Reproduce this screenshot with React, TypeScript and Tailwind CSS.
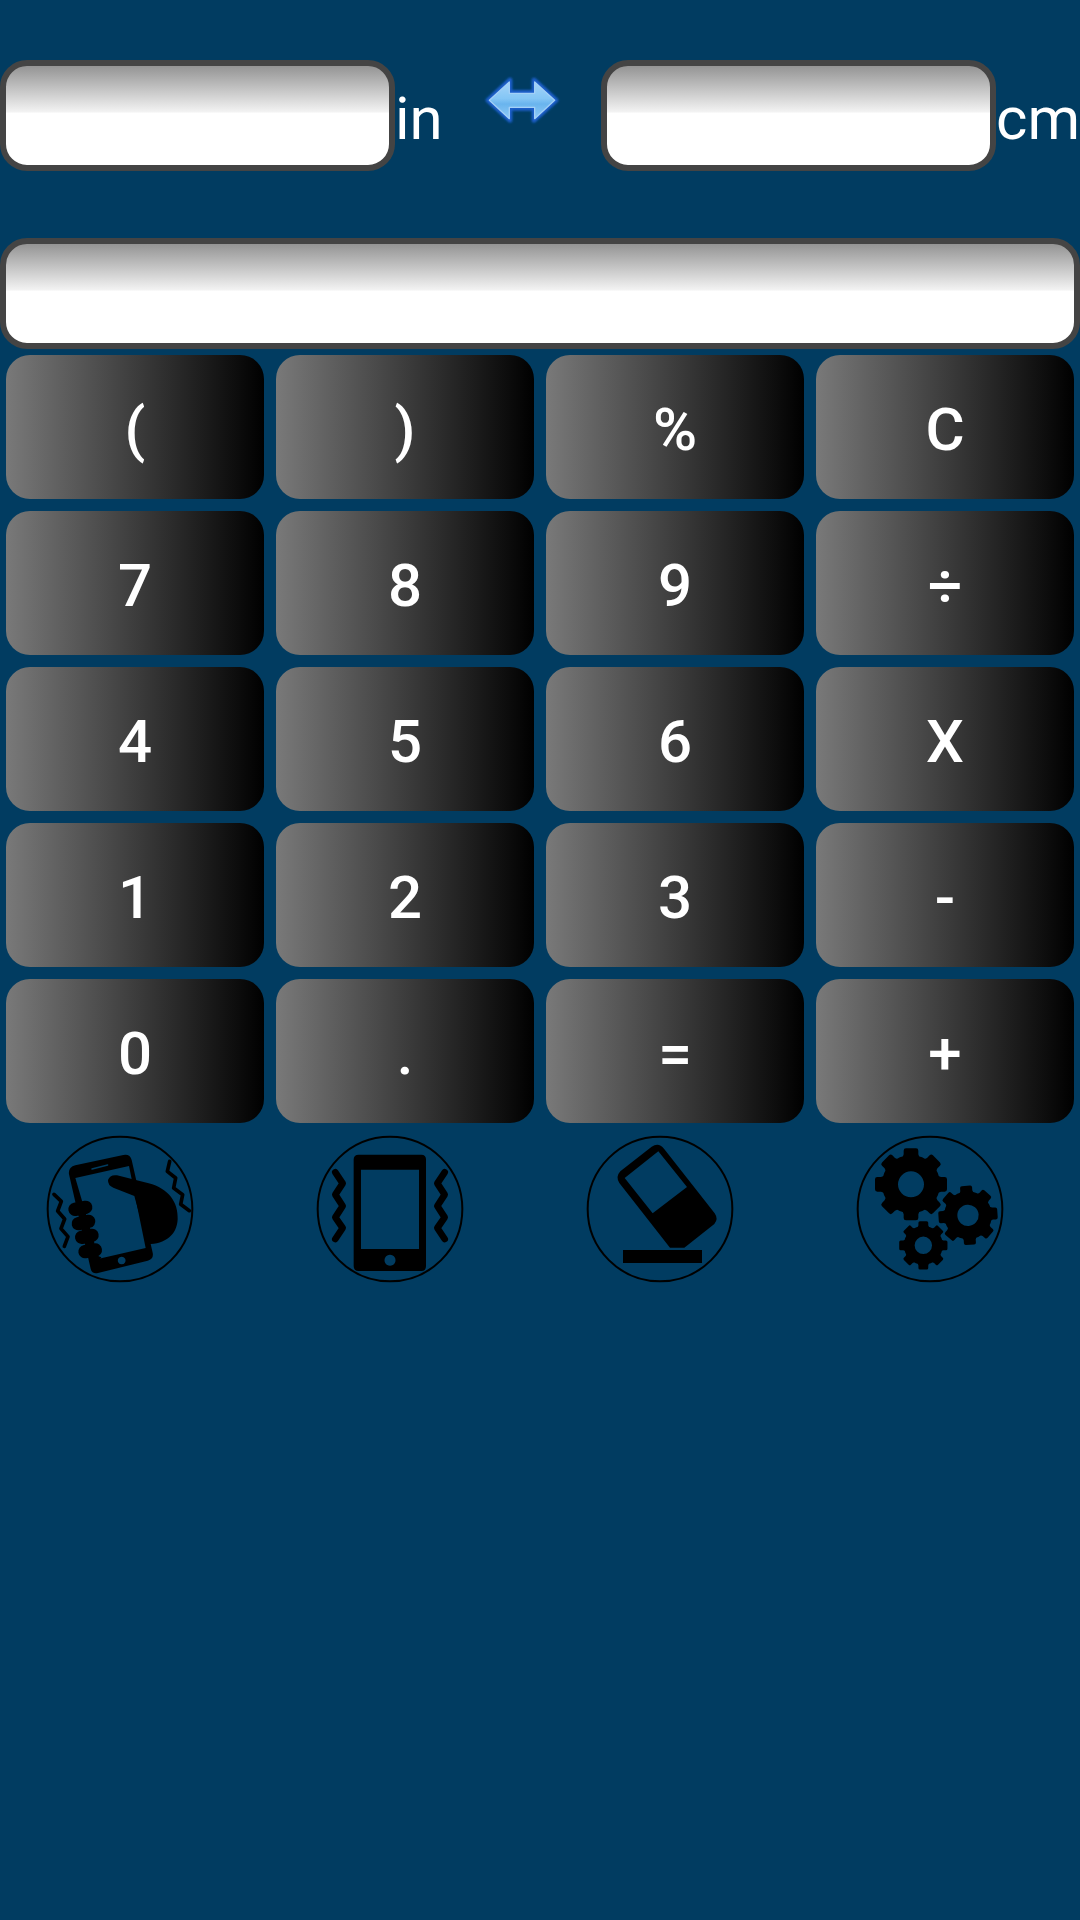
import type { ReactElement, ReactNode } from 'react'

const KEYS = [
  '(', ')', '%', 'C',
  '7', '8', '9', '÷',
  '4', '5', '6', 'X',
  '1', '2', '3', '-',
  '0', '.', '=', '+'
]

const TEETH = [0, 45, 90, 135, 180, 225, 270, 315]

function Field({ label, className }: { label: string; className: string }): ReactElement {
  return (
    <div
      role="textbox"
      aria-label={label}
      className={`h-[111px] shrink-0 rounded-[27px] border-6 border-[#444444] bg-[linear-gradient(180deg,#949494_0%,#f2f2f2_46%,#ffffff_48%)] bg-origin-padding ${className}`}
    />
  )
}

function SwapArrow(): ReactElement {
  return (
    <svg viewBox="0 0 330 240" className="h-20 w-[110px]">
      <defs>
        <linearGradient id="swap" x1="0" y1="0" x2="0" y2="1">
          <stop offset="0" stopColor="#a5d4f8" />
          <stop offset="0.45" stopColor="#84c6f5" />
          <stop offset="0.6" stopColor="#6ab4ee" />
          <stop offset="1" stopColor="#8fcaf6" />
        </linearGradient>
        <filter id="glow" x="-20%" y="-20%" width="140%" height="140%">
          <feGaussianBlur stdDeviation="3.5" />
        </filter>
        <filter id="soften" x="-5%" y="-5%" width="110%" height="110%">
          <feGaussianBlur stdDeviation="1.5" />
        </filter>
      </defs>
      <path
        d="M54 121 L120 60 V97 H192 V60 L258 121 L192 181 V145 H120 V181 Z"
        fill="#1c63c8"
        stroke="#1b5fca"
        strokeWidth="14"
        strokeLinejoin="round"
        filter="url(#glow)"
      />
      <path
        d="M58 121 L118 66 V100 H194 V66 L254 121 L194 176 V142 H118 V176 Z"
        fill="url(#swap)"
        stroke="#a3d0f7"
        strokeWidth="4"
        strokeLinejoin="round"
        filter="url(#soften)"
      />
    </svg>
  )
}

function IconButton({ label, children }: { label: string; children: ReactNode }): ReactElement {
  return (
    <button type="button" aria-label={label} className="h-40 w-40">
      <svg viewBox="0 0 480 480" className="h-40 w-40">
        <circle cx="240" cy="237" r="217" fill="none" stroke="#000" strokeWidth="6" />
        {children}
      </svg>
    </button>
  )
}

function ShakeIcon(): ReactElement {
  return (
    <>
      <path
        fillRule="evenodd"
        d="M106 106 L250 75 Q270 71 275 90 L338 368 Q342 387 323 392 L174 429 Q156 433 152 416 L87 133 Q84 112 106 106 Z M106 144 L177 386 L317 354 L267 108 Z M245 380 a11.500 11.500 0 1 0 .1 0 Z"
      />
      <path d="M156 117 L203 105" stroke="#003c61" strokeWidth="4" strokeLinecap="round" />
      <path d="M204 150 Q210 133 231 136 L326 160 C386 176 415 216 413 268 C411 315 376 342 323 343 L283 198 L220 173 Q203 166 204 150 Z" />
      <path d="M104 142 L121 214 L132 262 L158 372 L184 382 L172 400 L150 390 L96 140 Z" />
      <g stroke="#000" strokeWidth="40" strokeLinecap="round">
        <path d="M105 238 L137 232" />
        <path d="M115 281 L146 274" />
        <path d="M125 322 L156 316" />
        <path d="M135 365 L166 360" />
      </g>
      <g fill="none" stroke="#000" strokeWidth="11" strokeLinecap="round" strokeLinejoin="round">
        <path d="M42 193 L64 214 L53 243 L74 267 L63 296 L84 320 L73 349" />
        <path d="M389 94 L382 124 L407 144 L401 174 L428 194 L422 223 L448 242" />
      </g>
    </>
  )
}

function VibrateIcon(): ReactElement {
  return (
    <>
      <path
        fillRule="evenodd"
        d="M146 74 H334 Q348 74 348 88 V408 Q348 423 334 423 H146 Q131 423 131 408 V88 Q131 74 146 74 Z M153 119 V357 H327 V119 Z M240 374 a16.500 16.500 0 1 0 .1 0 Z"
      />
      <g fill="none" stroke="#000" strokeWidth="20" strokeLinecap="round" strokeLinejoin="round">
        <path d="M76 127 L98 160 L76 194 L98 228 L76 262 L98 294 L76 327" />
        <path d="M404 127 L382 160 L404 194 L382 228 L404 262 L382 294 L404 327" />
      </g>
    </>
  )
}

function EraserIcon(): ReactElement {
  return (
    <>
      <path
        fillRule="evenodd"
        d="M215 50 Q236 36 252 56 L404 250 Q416 267 403 282 L313 353 H270 L118 159 Q106 140 121 124 Z M235 64 L134 144 L218 250 L321 171 Z"
      />
      <rect x="129" y="360" width="237" height="39" />
    </>
  )
}

type GearProps = { cx: number; cy: number; scale: number; turn: number }

function Gear({ cx, cy, scale, turn }: GearProps): ReactElement {
  return (
    <g transform={`translate(${cx} ${cy}) rotate(${turn}) scale(${scale})`}>
      <circle r="63" fill="none" stroke="#000" strokeWidth="48" />
      {TEETH.map((angle) => (
        <path
          key={angle}
          transform={`rotate(${angle})`}
          d="M-28 -74 L-22 -90 V-101 Q-22 -108 -15 -108 H15 Q22 -108 22 -101 V-90 L28 -74 Z"
        />
      ))}
    </g>
  )
}

export default function App(): ReactElement {
  return (
    <main className="h-[1920px] w-[1080px] overflow-hidden bg-[#013c61] font-[Roboto,sans-serif] text-white">
      <div className="flex items-start pt-[60px]">
        <Field label="Inches" className="w-[395px]" />
        <span className="w-[75px] pt-[24px] text-[60px] leading-[70px]">in</span>
        <button type="button" aria-label="Swap units" className="mr-[21px] h-20 w-[110px]">
          <SwapArrow />
        </button>
        <Field label="Centimetres" className="w-[395px]" />
        <span className="pt-[24px] text-[60px] leading-[70px]">cm</span>
      </div>

      <div className="pt-[67px]">
        <Field label="Expression" className="w-full" />
      </div>

      <div className="grid grid-cols-4 gap-3 px-1.5 pt-1.5">
        {KEYS.map((key) => (
          <button
            key={key}
            type="button"
            className="h-36 rounded-[24px] bg-[linear-gradient(90deg,#797979,#000000)] pt-1.5 text-center text-[60px] leading-[70px] font-medium"
          >
            {key}
          </button>
        ))}
      </div>

      <div className="grid grid-cols-[repeat(4,270px)] pt-[7px] pl-10">
        <IconButton label="Shake">
          <ShakeIcon />
        </IconButton>
        <IconButton label="Vibrate">
          <VibrateIcon />
        </IconButton>
        <IconButton label="Erase">
          <EraserIcon />
        </IconButton>
        <IconButton label="Settings">
          <Gear cx={183} cy={163} scale={1} turn={0} />
          <Gear cx={354} cy={256} scale={0.82} turn={-4} />
          <Gear cx={220} cy={346} scale={0.67} turn={0} />
        </IconButton>
      </div>
    </main>
  )
}
